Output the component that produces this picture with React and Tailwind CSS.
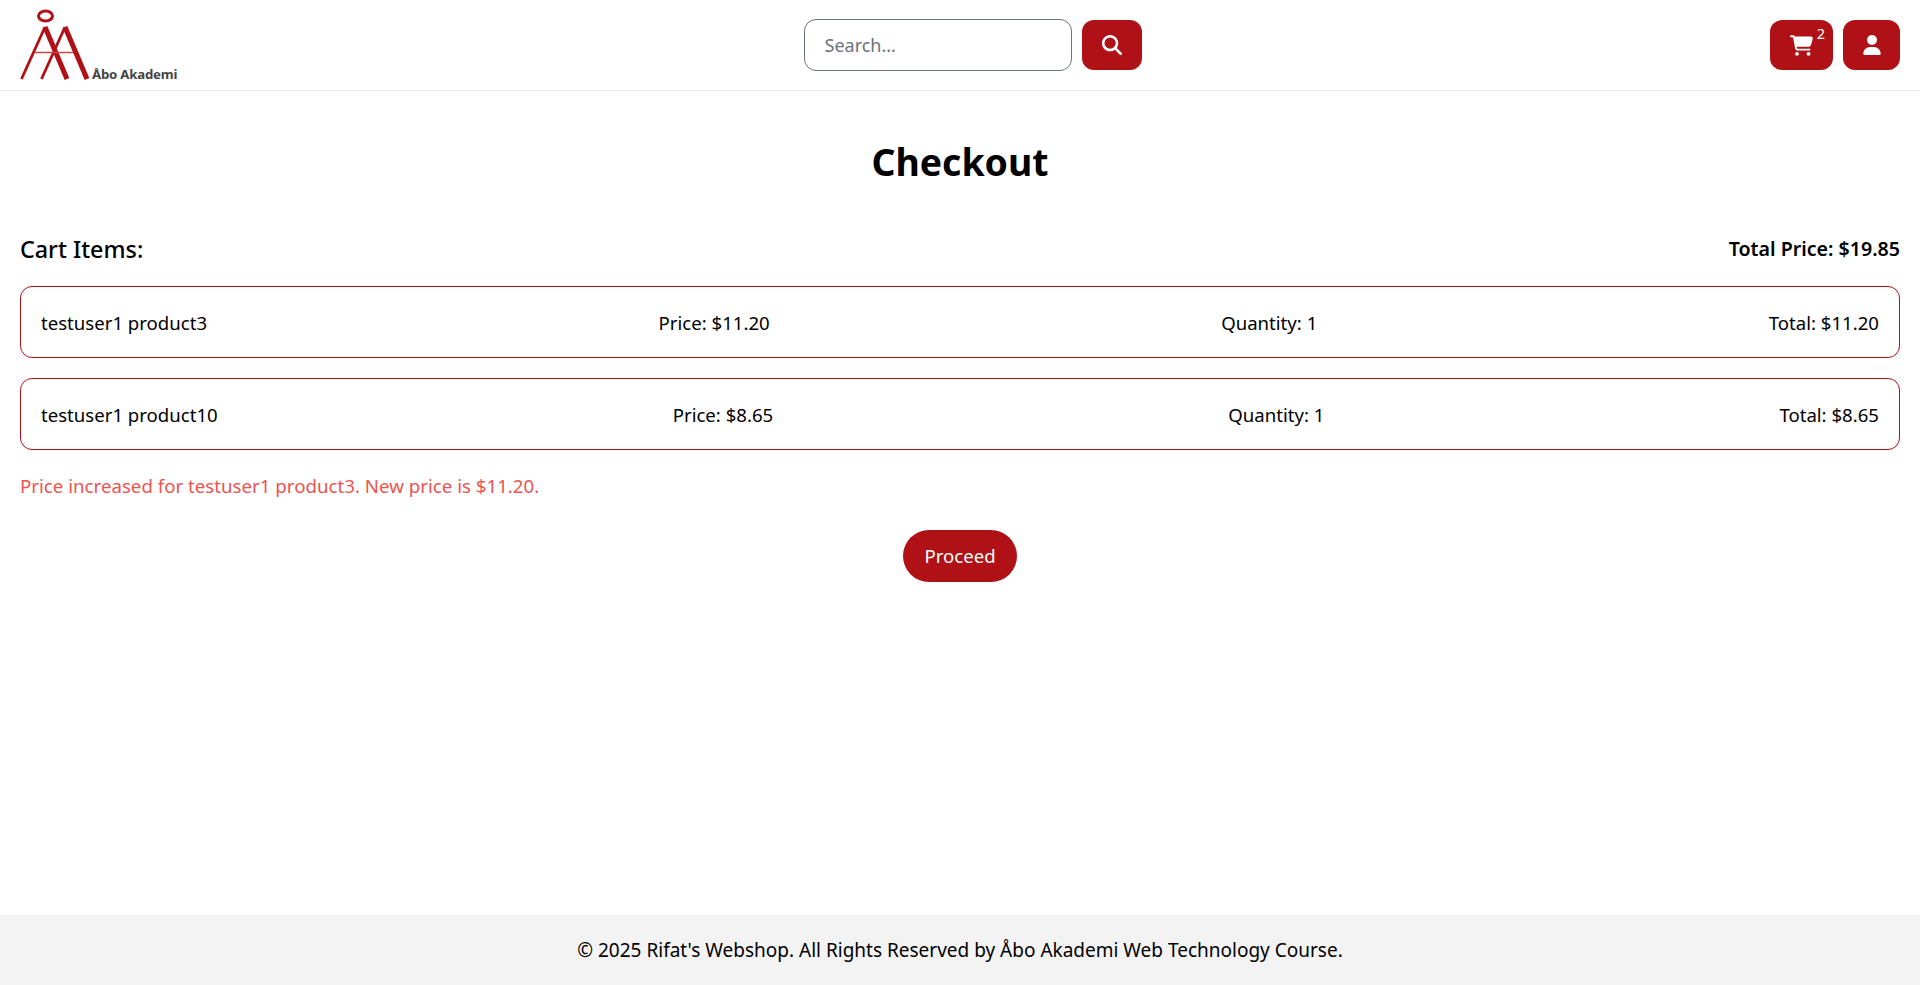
import { FaMagnifyingGlass, FaCartShopping, FaUser } from "react-icons/fa6";

const RED = "bg-[#b01116]";

function Logo() {
  return (
    <div className="flex items-end w-[155px] h-[72px]">
      <svg width="71" height="72" viewBox="0 0 71 72" className="shrink-0" fill="none" stroke="#b01116">
        <ellipse cx="25.5" cy="7" rx="7" ry="5" strokeWidth="3" />
        <path d="M25 18 L1.5 70" strokeWidth="2.8" />
        <path d="M25 18 L47 70" strokeWidth="5" />
        <path d="M45 18 L21.5 70" strokeWidth="2.8" />
        <path d="M45 18 L67 70" strokeWidth="5" />
        <path d="M15 43.5 L53 43.5" strokeWidth="1.4" stroke="#c4474b" />
      </svg>
      <span className="ml-[1px] mb-[-2px] text-[13.2px] leading-[18px] font-bold text-[#444] whitespace-nowrap tracking-[-0.2px]">Åbo Akademi</span>
    </div>
  );
}

function Row({ name, price, qty, total }) {
  return (
    <div className="flex justify-between items-center h-[72px] px-5 pt-[1px] border border-[#b01116] rounded-xl text-[18.6px]">
      <span>{name}</span>
      <span>Price: {price}</span>
      <span>Quantity: {qty}</span>
      <span>Total: {total}</span>
    </div>
  );
}

export default function App() {
  return (
    <div className="h-[985px] overflow-hidden flex flex-col bg-white text-black font-['Noto_Sans','Open_Sans',sans-serif]">
      <header className="h-[91px] shrink-0 flex items-center justify-between px-5 border-b border-[#e8e8e8]">
        <Logo />
        <div className="flex items-center gap-[10px]">
          <div className="w-[268px] h-[52px] flex items-center px-5 pt-[1px] border border-[#6b7280] rounded-xl text-[18px] text-[#6b7280]">Search...</div>
          <button className={`w-[60px] h-[50px] flex items-center justify-center rounded-xl ${RED}`}>
            <FaMagnifyingGlass size={20} color="#fff" />
          </button>
        </div>
        <div className="flex items-center gap-[10px]">
          <button className={`relative w-[63px] h-[50px] flex items-center justify-center rounded-xl ${RED}`}>
            <FaCartShopping size={23} color="#fff" />
            <span className="absolute right-[8px] top-[3px] text-[14.5px] leading-[20px] text-white">2</span>
          </button>
          <button className={`w-[57px] h-[50px] flex items-center justify-center rounded-xl ${RED}`}>
            <FaUser size={20} color="#fff" />
          </button>
        </div>
      </header>
      <main className="flex-1 px-5">
        <h1 className="mt-[47px] text-center text-[37.4px] leading-[48px] font-bold">Checkout</h1>
        <div className="mt-[45px] flex items-center justify-between h-[36px]">
          <h2 className="text-[23.3px] font-medium">Cart Items:</h2>
          <span className="text-[19.6px] font-semibold">Total Price: $19.85</span>
        </div>
        <div className="mt-[19px] flex flex-col gap-5">
          <Row name="testuser1 product3" price="$11.20" qty="1" total="$11.20" />
          <Row name="testuser1 product10" price="$8.65" qty="1" total="$8.65" />
        </div>
        <p className="mt-[22px] text-[18.7px] leading-[28px] text-[#ef5350]">Price increased for testuser1 product3. New price is $11.20.</p>
        <div className="mt-[30px] flex justify-center">
          <button className={`w-[114px] h-[52px] rounded-full text-[18.6px] text-white ${RED}`}>Proceed</button>
        </div>
      </main>
      <footer className="h-[70px] shrink-0 flex items-center justify-center bg-[#f3f3f3] text-[19px]">
        © 2025 Rifat's Webshop. All Rights Reserved by Åbo Akademi Web Technology Course.
      </footer>
    </div>
  );
}
